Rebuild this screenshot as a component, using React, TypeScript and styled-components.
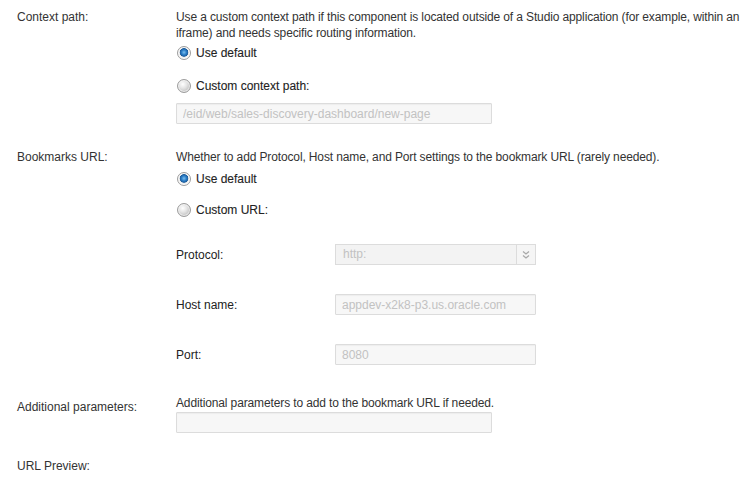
import styled, { createGlobalStyle } from "styled-components";

const GlobalStyle = createGlobalStyle`
	html, body {
		margin: 0;
		padding: 0;
		background: #ffffff;
	}
	body {
		font-family: "Liberation Sans", Arial, sans-serif;
		font-size: 12px;
		color: #333333;
	}
`;

function Radio({ checked, label }: { checked?: boolean; label: string }) {
	return (
		<StyledOption>
			<StyledRadio $checked={checked} />
			<span>{label}</span>
		</StyledOption>
	);
}

function Chevrons() {
	return (
		<svg width="8" height="10" viewBox="0 0 8 10">
			<path d="M1 1.5 L4 4 L7 1.5 M1 5.5 L4 8 L7 5.5" fill="none" stroke="#a8a8a8" strokeWidth="1.3" />
		</svg>
	);
}

export default function App() {
	return (
		<>
			<GlobalStyle />
			<StyledPage>
				<StyledRow>
					<StyledLabel>Context path:</StyledLabel>
					<StyledBody>
						<StyledDescription>
							Use a custom context path if this component is located outside of a Studio application (for example, within an iframe) and needs specific routing information.
						</StyledDescription>
						<StyledOptions $first={2} $gap={13}>
							<Radio checked label="Use default" />
							<Radio label="Custom context path:" />
						</StyledOptions>
						<StyledInput $width={316} $top={7} placeholder="/eid/web/sales-discovery-dashboard/new-page" disabled />
					</StyledBody>
				</StyledRow>

				<StyledRow $top={25}>
					<StyledLabel>Bookmarks URL:</StyledLabel>
					<StyledBody>
						<StyledDescription>Whether to add Protocol, Host name, and Port settings to the bookmark URL (rarely needed).</StyledDescription>
						<StyledOptions $first={4} $gap={11}>
							<Radio checked label="Use default" />
							<Radio label="Custom URL:" />
						</StyledOptions>
						<StyledSubFields>
							<StyledSubRow>
								<StyledSubLabel>Protocol:</StyledSubLabel>
								<StyledSelect>
									<StyledSelectValue>http:</StyledSelectValue>
									<StyledSelectButton>
										<Chevrons />
									</StyledSelectButton>
								</StyledSelect>
							</StyledSubRow>
							<StyledSubRow>
								<StyledSubLabel>Host name:</StyledSubLabel>
								<StyledInput $width={201} placeholder="appdev-x2k8-p3.us.oracle.com" disabled />
							</StyledSubRow>
							<StyledSubRow>
								<StyledSubLabel>Port:</StyledSubLabel>
								<StyledInput $width={201} placeholder="8080" disabled />
							</StyledSubRow>
						</StyledSubFields>
					</StyledBody>
				</StyledRow>

				<StyledRow $top={30}>
					<StyledLabel $offset={4}>Additional parameters:</StyledLabel>
					<StyledBody>
						<StyledDescription>Additional parameters to add to the bookmark URL if needed.</StyledDescription>
						<StyledInput $width={316} $top={1} />
					</StyledBody>
				</StyledRow>

				<StyledRow $top={25}>
					<StyledLabel>URL Preview:</StyledLabel>
				</StyledRow>
			</StyledPage>
		</>
	);
}

const StyledPage = styled.main`
	display: flex;
	flex-direction: column;
	padding: 9px 0 0 17px;
	width: 738px;
`;
const StyledRow = styled.section<{ $top?: number }>`
	display: grid;
	grid-template-columns: 159px 1fr;
	margin-top: ${(p) => p.$top ?? 0}px;
`;
const StyledLabel = styled.div<{ $offset?: number }>`
	line-height: 16px;
	padding-top: ${(p) => p.$offset ?? 0}px;
	color: #333333;
`;
const StyledBody = styled.div`
	display: flex;
	flex-direction: column;
	align-items: flex-start;
`;
const StyledDescription = styled.p`
	margin: 0;
	line-height: 16px;
	letter-spacing: -0.13px;
	color: #333333;
`;
const StyledOptions = styled.div<{ $first: number; $gap: number }>`
	display: flex;
	flex-direction: column;
	gap: ${(p) => p.$gap}px;
	margin-top: ${(p) => p.$first}px;
`;
const StyledOption = styled.label`
	display: flex;
	align-items: center;
	gap: 5px;
	height: 20px;
	color: #222222;
	-webkit-text-stroke: 0.1px #222222;
`;
const StyledRadio = styled.span<{ $checked?: boolean }>`
	box-sizing: border-box;
	width: 14px;
	height: 14px;
	margin-left: 1px;
	border-radius: 50%;
	border: 1px solid #9c9c9c;
	background: ${(p) =>
		p.$checked
			? "radial-gradient(circle at 50% 45%, #7cc0ef 0, #2a7cc6 2.5px, #1d5d9c 4px, #e9e9e9 4.6px, #f6f6f6 6px)"
			: "radial-gradient(circle at 40% 35%, #ffffff 0, #e4e4e4 4px, #c9c9c9 7px)"};
	box-shadow: inset 0 0 0 1px rgba(255, 255, 255, 0.6);
`;
const StyledInput = styled.input<{ $width: number; $top?: number }>`
	box-sizing: border-box;
	width: ${(p) => p.$width}px;
	height: 21px;
	margin: ${(p) => p.$top ?? 0}px 0 0 0;
	padding: 0 6px;
	border: 1px solid #dcdcdc;
	border-radius: 1px;
	background: #f7f7f7;
	box-shadow: inset 0 1px 1px rgba(0, 0, 0, 0.04);
	font: 12px "Liberation Sans", Arial, sans-serif;
	color: #333333;
	&::placeholder {
		color: #c2c2c2;
		opacity: 1;
	}
`;
const StyledSubFields = styled.div`
	display: flex;
	flex-direction: column;
	gap: 29px;
	margin-top: 24px;
`;
const StyledSubRow = styled.div`
	display: grid;
	grid-template-columns: 159px 201px;
	align-items: center;
`;
const StyledSubLabel = styled.div`
	line-height: 16px;
	color: #222222;
`;
const StyledSelect = styled.div`
	box-sizing: border-box;
	display: flex;
	width: 201px;
	height: 21px;
	border: 1px solid #dcdcdc;
	background: #f3f3f3;
`;
const StyledSelectValue = styled.span`
	flex: 1;
	padding: 0 7px;
	line-height: 19px;
	color: #c2c2c2;
`;
const StyledSelectButton = styled.span`
	display: flex;
	align-items: center;
	justify-content: center;
	width: 18px;
	border-left: 1px solid #dcdcdc;
	background: #f5f5f5;
`;
